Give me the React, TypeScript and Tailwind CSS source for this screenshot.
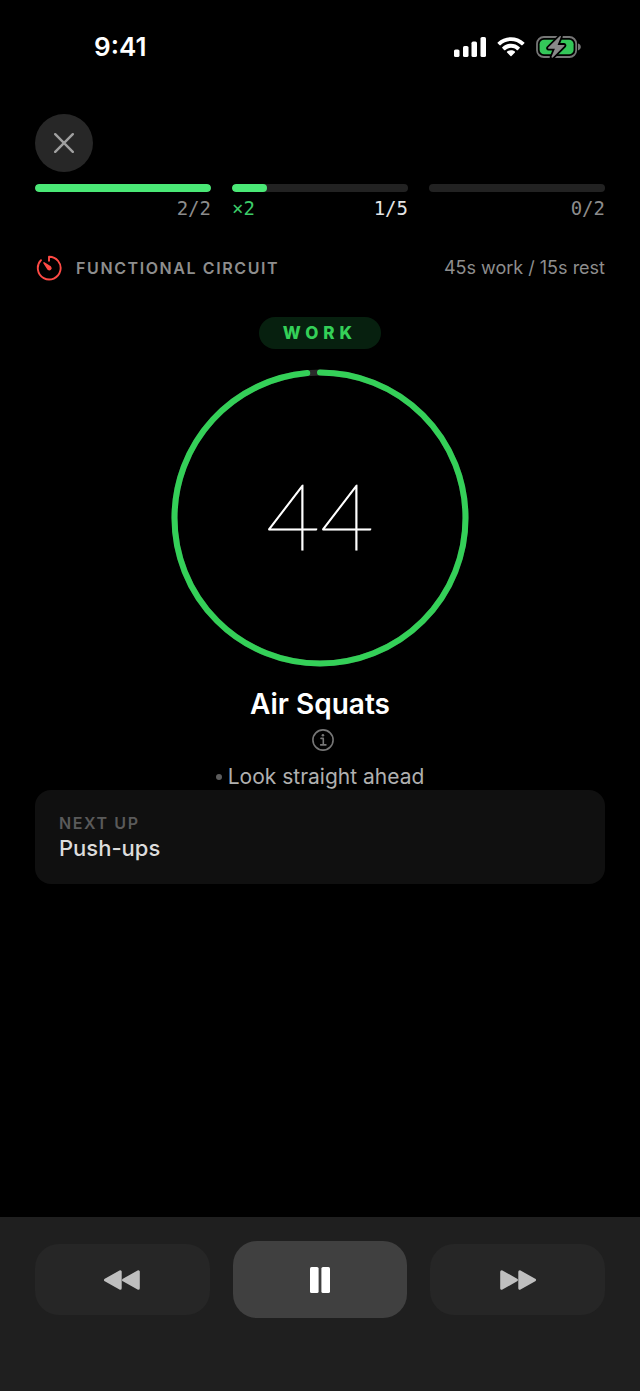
import type { ReactNode } from "react";

type Segment = {
  id: string;
  done: number;
  total: number;
  rounds?: string;
  percent: number;
  active?: boolean;
};

const segments: Segment[] = [
  { id: "warmup", done: 2, total: 2, percent: 100 },
  { id: "circuit", done: 1, total: 5, rounds: "×2", percent: 20, active: true },
  { id: "cooldown", done: 0, total: 2, percent: 0 },
];

const signalIcon = (
  <svg width="32" height="20" viewBox="0 0 32 20" className="fill-white" aria-hidden="true">
    <rect x="0" y="12.5" width="5.5" height="7.5" rx="1.6" />
    <rect x="9" y="9" width="5.5" height="11" rx="1.6" />
    <rect x="17.5" y="4.6" width="5.5" height="15.4" rx="1.6" />
    <rect x="26.5" y="0" width="5.5" height="20" rx="1.6" />
  </svg>
);

const wifiIcon = (
  <svg width="28" height="20" viewBox="0 0 17 12" className="fill-white" aria-hidden="true">
    <path d="M8.5 2.4c2.4 0 4.7.9 6.4 2.6.1.1.3.1.5 0l1.2-1.3c.2-.1.2-.4 0-.5C12.1-1 4.9-1 .4 3.2c-.2.1-.2.4 0 .5L1.6 5c.2.1.4.1.5 0 1.7-1.7 4-2.6 6.4-2.6Z" />
    <path d="M8.5 6.5c1.3 0 2.6.5 3.6 1.4.1.1.4.1.5 0l1.2-1.3c.2-.1.2-.4 0-.5-3-2.8-7.6-2.8-10.6 0-.2.1-.2.4 0 .5l1.2 1.3c.1.1.4.1.5 0 1-.9 2.3-1.4 3.6-1.4Z" />
    <path d="M10.9 9.3c.1-.1.1-.4 0-.5-1.4-1.2-3.4-1.2-4.8 0-.1.1-.2.4 0 .5l2.1 2.2c.2.2.4.2.6 0l2.1-2.2Z" />
  </svg>
);

const batteryIcon = (
  <svg width="45" height="24" viewBox="0 0 45 24" aria-hidden="true">
    <rect x="1" y="2" width="39.2" height="20" rx="6.8" fill="none" stroke="#767676" strokeWidth="1.8" />
    <path d="M42 8.6c1.8.6 2.8 1.9 2.8 3.4s-1 2.8-2.8 3.4Z" fill="#767676" />
    <rect x="3.6" y="4.7" width="34" height="14.6" rx="4.6" fill="#34c759" />
    <path
      d="M23.7 1.3 12.2 12.6c-.5.6-.2 1.2.5 1.2h6.2l-3.3 7.8c-.4 1 .5 1.6 1.2.8l11.5-11.3c.5-.6.2-1.2-.5-1.2h-6.2l3.2-7.8c.4-1-.4-1.6-1.1-.8Z"
      fill="#8a8a8a"
      stroke="#000"
      strokeWidth="3.6"
      paintOrder="stroke"
    />
  </svg>
);

const timerIcon = (
  <svg
    width="26"
    height="26"
    viewBox="0 0 26 26"
    fill="none"
    stroke="#ff4a45"
    strokeWidth="1.9"
    strokeLinecap="round"
    strokeLinejoin="round"
    aria-hidden="true"
  >
    <path d="M13 5.8V1.7A11.4 11.4 0 1 1 5 5.2" />
    <path d="M8 7.9 14.4 12a1.5 1.5 0 0 1-2.2 2.2Z" fill="#ff4a45" strokeWidth="1.6" />
  </svg>
);

const infoIcon = (
  <svg width="22" height="22" viewBox="0 0 22 22" fill="none" stroke="#767676" aria-hidden="true">
    <circle cx="11" cy="11" r="10.1" strokeWidth="1.6" />
    <circle cx="10.9" cy="6.2" r="1.3" fill="#767676" stroke="none" />
    <path d="M9 9.4h2.3v6.4M8.7 15.9h5.2" strokeWidth="1.6" strokeLinecap="round" strokeLinejoin="round" />
  </svg>
);

const rewindIcon = (
  <svg
    width="36"
    height="20"
    viewBox="0 0 36 20"
    className="fill-[#bfbfbf] stroke-[#bfbfbf]"
    strokeWidth="3"
    strokeLinejoin="round"
    aria-hidden="true"
  >
    <path d="M1.5 10 16.2 1.7v16.6Z" />
    <path d="M19.6 10 34.3 1.7v16.6Z" />
  </svg>
);

const pauseIcon = (
  <svg width="20" height="26" viewBox="0 0 20 26" className="fill-white" aria-hidden="true">
    <rect x="0" y="0" width="8.6" height="26" rx="1.6" />
    <rect x="11.4" y="0" width="8.6" height="26" rx="1.6" />
  </svg>
);

const ProgressSegment = ({ segment }: { segment: Segment }) => {
  const { done, total, rounds, percent, active } = segment;

  return (
    <div className="flex-1">
      <div className="h-2 overflow-hidden rounded-full bg-[#222222]">
        <div className="h-full rounded-full bg-[#4ae876]" style={{ width: `${percent}%` }}></div>
      </div>
      <div className="mt-1 flex justify-between font-['DejaVu_Sans_Mono',monospace] text-[19px] leading-6">
        <span className="text-[#3ccb68]">{rounds}</span>
        <span className={active ? "text-[#e4e4e4]" : "text-[#8c8c8c]"}>
          {done}/{total}
        </span>
      </div>
    </div>
  );
};

const CountdownRing = ({ seconds }: { seconds: number }) => {
  return (
    <div className="relative mt-5 flex size-[298px] items-center justify-center pb-2">
      <svg viewBox="0 0 298 298" className="absolute inset-0 -rotate-90" fill="none" strokeWidth="6" aria-hidden="true">
        <circle cx="149" cy="149" r="145.5" stroke="#2a2a2a" />
        <circle
          cx="149"
          cy="149"
          r="145.5"
          stroke="#34d058"
          strokeLinecap="round"
          pathLength="1000"
          strokeDasharray="986 14"
        />
      </svg>
      <span className="font-[Lato,sans-serif] text-[93px] font-thin leading-none text-white [-webkit-text-stroke:1px_white]">
        {seconds}
      </span>
    </div>
  );
};

const SkipButton = ({ label, children }: { label: string; children: ReactNode }) => {
  return (
    <button
      type="button"
      aria-label={label}
      className="flex h-[71px] flex-1 items-center justify-center rounded-3xl bg-[#262626]"
    >
      {children}
    </button>
  );
};

const App = () => {
  return (
    <div className="flex min-h-screen flex-col bg-black font-[Inter,sans-serif] text-white">
      <header className="flex h-[94px] items-center justify-between pl-[94px] pr-[59px]">
        <span className="text-[26px] font-semibold leading-8">9:41</span>
        <div className="flex items-center gap-[11px]">
          {signalIcon}
          {wifiIcon}
          {batteryIcon}
        </div>
      </header>

      <main className="flex flex-col px-[35px] pt-5">
        <button
          type="button"
          aria-label="Close workout"
          className="flex size-[58px] items-center justify-center rounded-full bg-[#272727]"
        >
          <svg width="20" height="20" viewBox="0 0 20 20" stroke="#a0a0a0" strokeWidth="2.4" strokeLinecap="round" aria-hidden="true">
            <path d="M1.2 1.2 18.8 18.8M18.8 1.2 1.2 18.8" />
          </svg>
        </button>

        <div className="mt-3 flex gap-[21px]">
          {segments.map((segment) => (
            <ProgressSegment key={segment.id} segment={segment} />
          ))}
        </div>

        <div className="mt-9 flex h-6 items-center justify-between">
          <div className="flex items-center gap-3.5 pl-px">
            {timerIcon}
            <h1 className="text-base font-semibold tracking-widest text-[#8e8e8e]">FUNCTIONAL CIRCUIT</h1>
          </div>
          <p className="text-lg leading-6 text-[#8e8e8e]">45s work / 15s rest</p>
        </div>

        <section className="mt-[37px] flex flex-col items-center">
          <span className="rounded-full bg-[#07200f] px-6 text-[17px] font-extrabold leading-8 tracking-[5px] text-[#34d058]">
            WORK
          </span>
          <CountdownRing seconds={44} />
          <h2 className="mt-[19px] text-[28px] font-semibold leading-9">Air Squats</h2>
          <button type="button" aria-label="Exercise details" className="ml-1.5 mt-[7px]">
            {infoIcon}
          </button>
          <ul className="mt-3 text-[21px] leading-[27px] text-[#b0b0b0]">
            <li className="flex items-center gap-1.5">
              <span className="size-1.5 rounded-full bg-[#5c5c5c]"></span>
              Look straight ahead
            </li>
          </ul>
        </section>

        <section className="rounded-2xl bg-[#101010] px-6 pb-[22px] pt-[23px]">
          <h3 className="text-base font-semibold leading-5 tracking-widest text-[#5a5a5a]">NEXT UP</h3>
          <p className="mt-px text-[22px] font-medium leading-7 text-[#dcdcdc]">Push-ups</p>
        </section>
      </main>

      <footer className="mt-auto flex items-center gap-[23px] bg-[#1f1f1f] px-[35px] pb-[73px] pt-6">
        <SkipButton label="Previous exercise">{rewindIcon}</SkipButton>
        <button
          type="button"
          aria-label="Pause"
          className="flex h-[77px] flex-1 items-center justify-center rounded-3xl bg-[#404040]"
        >
          {pauseIcon}
        </button>
        <SkipButton label="Next exercise">
          <span className="rotate-180">{rewindIcon}</span>
        </SkipButton>
      </footer>
    </div>
  );
};

export default App;
